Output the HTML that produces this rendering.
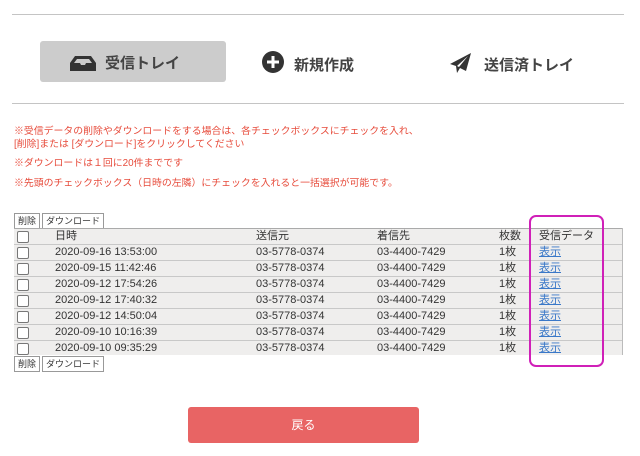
<!DOCTYPE html>
<html><head><meta charset="utf-8"><style>
body{margin:0;width:640px;height:456px;background:#fff;position:relative;overflow:hidden;font-family:"Liberation Sans","Noto Sans CJK JP",sans-serif;}
.a{position:absolute;white-space:nowrap}
.hl{position:absolute;left:12px;width:612px;height:1px;background:#c4c4c4}
.tab{font-size:15px;font-weight:600;color:#444;}
.red{color:#e74c3c;font-size:9.9px;}
.row{position:absolute;left:14px;width:609px;height:15px;background:#efeeed;border-bottom:1px solid #c8c8c8;font-size:11px;color:#333;}
.row span{position:absolute;top:0;line-height:15px;height:15px}
.cb{position:absolute;left:3px;top:2px;width:10px;height:10px;border:1px solid #777;background:#fff;border-radius:2px}
.lnk{color:#3a78c8;text-decoration:underline}
.btn{position:absolute;height:14px;border:1px solid #999;background:#fff;font-size:9px;line-height:14px;padding:0 3px;color:#333}
</style></head><body>
<div class="hl" style="top:14px"></div>
<div class="a" style="left:40px;top:41px;width:186px;height:41px;background:#cccccc;border-radius:3px"></div>
<svg class="a" style="left:70px;top:56px" width="26" height="15" viewBox="0 0 26 15"><path d="M5 0h16l5 7v8H0V7z" fill="#333"/><path d="M4 7l3-4h12l3 4h-6l-1 2h-4l-1-2z" fill="#ccc"/></svg>
<div class="a tab" style="left:105px;top:52px">受信トレイ</div>
<svg class="a" style="left:262px;top:51px" width="22" height="22"><circle cx="11" cy="11" r="11" fill="#333"/><path d="M11 5v12M5 11h12" stroke="#fff" stroke-width="3"/></svg>
<div class="a tab" style="left:294px;top:54px">新規作成</div>
<svg class="a" style="left:450px;top:52px" width="22" height="22" viewBox="0 0 22 22"><path d="M21 1L0 12l6 2 1 7 3-5 6 3z" fill="#333"/><path d="M7 14L18 4 9 15z" fill="#fff"/></svg>
<div class="a tab" style="left:484px;top:54px">送信済トレイ</div>
<div class="hl" style="top:103px"></div>
<div class="a red" style="left:14px;top:123px">※受信データの削除やダウンロードをする場合は、各チェックボックスにチェックを入れ、</div>
<div class="a red" style="left:14px;top:136px">[削除]または [ダウンロード]をクリックしてください</div>
<div class="a red" style="left:14px;top:155px">※ダウンロードは１回に20件までです</div>
<div class="a red" style="left:14px;top:175px">※先頭のチェックボックス（日時の左隣）にチェックを入れると一括選択が可能です。</div>
<div class="btn" style="left:14px;top:213px">削除</div>
<div class="btn" style="left:42px;top:213px">ダウンロード</div>
<div class="a" style="left:14px;top:228px;width:609px;height:1px;background:#aaa"></div>
<div class="row" style="top:229px"><div class="cb"></div><span style="left:41px">日時</span><span style="left:242px">送信元</span><span style="left:363px">着信先</span><span style="left:485px">枚数</span><span style="left:525px">受信データ</span></div>
<div class="row" style="top:245px"><div class="cb"></div><span style="left:41px">2020-09-16 13:53:00</span><span style="left:242px">03-5778-0374</span><span style="left:363px">03-4400-7429</span><span style="left:485px">1枚</span><span style="left:525px" class="lnk">表示</span></div>
<div class="row" style="top:261px"><div class="cb"></div><span style="left:41px">2020-09-15 11:42:46</span><span style="left:242px">03-5778-0374</span><span style="left:363px">03-4400-7429</span><span style="left:485px">1枚</span><span style="left:525px" class="lnk">表示</span></div>
<div class="row" style="top:277px"><div class="cb"></div><span style="left:41px">2020-09-12 17:54:26</span><span style="left:242px">03-5778-0374</span><span style="left:363px">03-4400-7429</span><span style="left:485px">1枚</span><span style="left:525px" class="lnk">表示</span></div>
<div class="row" style="top:293px"><div class="cb"></div><span style="left:41px">2020-09-12 17:40:32</span><span style="left:242px">03-5778-0374</span><span style="left:363px">03-4400-7429</span><span style="left:485px">1枚</span><span style="left:525px" class="lnk">表示</span></div>
<div class="row" style="top:309px"><div class="cb"></div><span style="left:41px">2020-09-12 14:50:04</span><span style="left:242px">03-5778-0374</span><span style="left:363px">03-4400-7429</span><span style="left:485px">1枚</span><span style="left:525px" class="lnk">表示</span></div>
<div class="row" style="top:325px"><div class="cb"></div><span style="left:41px">2020-09-10 10:16:39</span><span style="left:242px">03-5778-0374</span><span style="left:363px">03-4400-7429</span><span style="left:485px">1枚</span><span style="left:525px" class="lnk">表示</span></div>
<div class="row" style="top:341px;height:14px;border:none"><div class="cb"></div><span style="left:41px">2020-09-10 09:35:29</span><span style="left:242px">03-5778-0374</span><span style="left:363px">03-4400-7429</span><span style="left:485px">1枚</span><span style="left:525px" class="lnk">表示</span></div>
<div class="a" style="left:622px;top:228px;width:1px;height:127px;background:#bbb"></div>
<div class="btn" style="left:14px;top:356px">削除</div>
<div class="btn" style="left:42px;top:356px">ダウンロード</div>
<div class="a" style="left:529px;top:215px;width:71px;height:148px;border:2px solid #d020b8;border-radius:7px"></div>
<div class="a" style="left:188px;top:407px;width:231px;height:36px;background:#e86464;border-radius:3px;color:#fff;font-size:12px;text-align:center;line-height:36px">戻る</div>
</body></html>
